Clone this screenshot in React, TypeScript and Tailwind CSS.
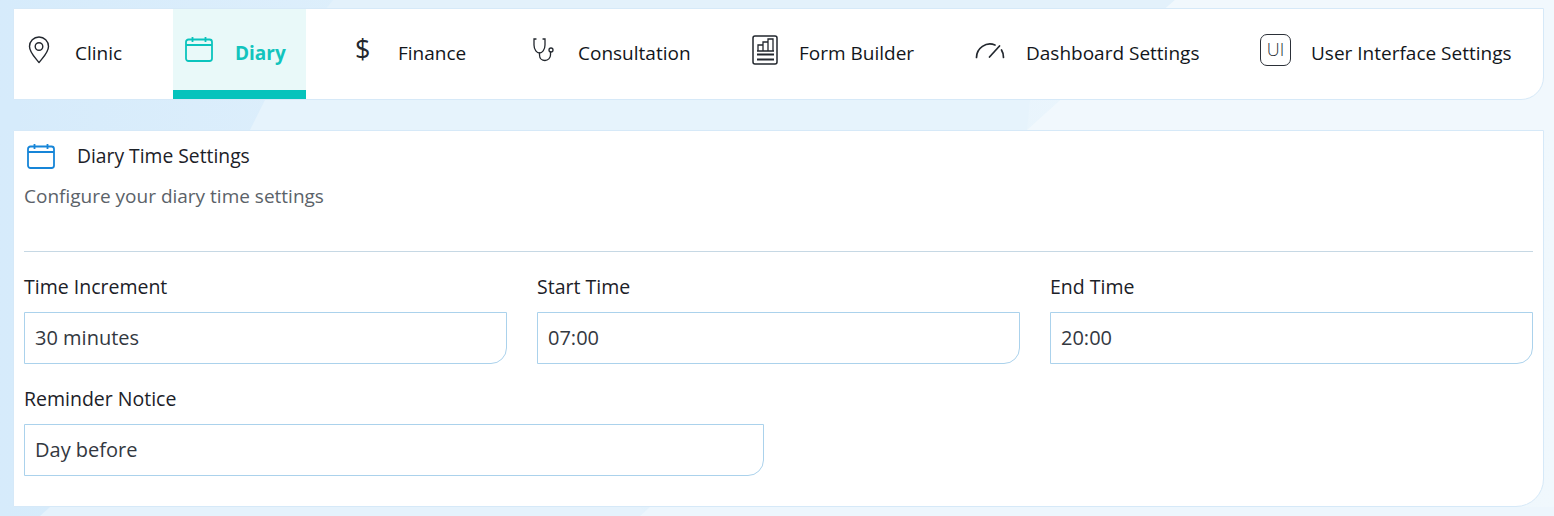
const font = "font-['Open_Sans',sans-serif]";

function PinIcon() {
  return (
    <svg width="22" height="28" viewBox="0 0 22 28" fill="none" stroke="#22272e" strokeWidth="1.4">
      <path d="M11 26.500C7 21.500 1.500 16.500 1.500 10.500a9.500 9.500 0 0 1 19 0c0 6-5.500 11-9.500 16z" strokeLinejoin="round" />
      <circle cx="11" cy="10.500" r="3.800" />
    </svg>
  );
}

function CalendarIcon({ color }: { color: string }) {
  return (
    <svg width="28" height="25" viewBox="0 0 28 25" fill="none" stroke={color} strokeWidth="1.8">
      <rect x="1" y="2.500" width="26" height="21.500" rx="2.500" />
      <path d="M1 8h26M7.500 0v5M20.500 0v5" />
    </svg>
  );
}

function StethoscopeIcon() {
  return (
    <svg width="22" height="25" viewBox="0 0 22 25" fill="none" stroke="#22272e" strokeWidth="1.300" strokeLinecap="round">
      <path d="M4 2H2v6c0 5 3 8 5.500 8S13 13 13 8V2h-2" />
      <path d="M7.500 16v2c0 3.500 2.500 5.500 5.500 5.500s5.500-2.500 5.500-5.500v-3" />
      <circle cx="19" cy="13" r="2" />
    </svg>
  );
}

function ReportIcon() {
  return (
    <svg width="26" height="30" viewBox="0 0 26 30" fill="none" stroke="#22272e" strokeWidth="1.300">
      <rect x="1" y="1" width="24" height="28" rx="2" strokeWidth="1.500" />
      <path d="M6 16v-6h5v6M11 16V7h5v9M16 16V4h5v12M5 16h17" />
      <path d="M5 19.500h17M5 24.500h17" strokeWidth="1.800" />
    </svg>
  );
}

function GaugeIcon() {
  return (
    <svg width="30" height="18" viewBox="0 0 30 18" fill="none" stroke="#22272e" strokeWidth="1.700" strokeLinecap="round">
      <path d="M1.500 16.500A13.500 13.500 0 0 1 20 4" />
      <path d="M14.500 16 24.500 5" />
      <path d="M26.500 9a13.500 13.500 0 0 1 2 7.500" />
    </svg>
  );
}

const tabs = [
  { label: "Clinic", icon: <PinIcon />, className: "-ml-[2px] w-[132px] shrink-0", iconClass: "pl-[4px]" },
  { label: "Diary", icon: <CalendarIcon color="#0bc4bd" />, className: "w-[133px] shrink-0", iconClass: "", active: true },
  {
    label: "Finance",
    icon: <span className="-mt-[2px] text-[27px] leading-none text-[#22272e]">$</span>,
    className: "w-[151px] shrink-0",
    iconClass: "pl-[8px]",
  },
  { label: "Consultation", icon: <StethoscopeIcon />, className: "w-[192px] shrink-0", iconClass: "pl-[5px]" },
  { label: "Form Builder", icon: <ReportIcon />, className: "w-[198px] shrink-0", iconClass: "pl-[4px]" },
  { label: "Dashboard Settings", icon: <GaugeIcon />, className: "w-[256px] shrink-0", iconClass: "" },
  {
    label: "User Interface Settings",
    icon: (
      <span className="flex h-[32px] w-[31px] items-center justify-center rounded-[7px] border-[1.5px] border-[#2b3038] text-[18px] font-light text-[#2b3038]">
        UI
      </span>
    ),
    className: "flex-1",
    iconClass: "",
  },
];

function Field({ label, value }: { label: string; value: string }) {
  return (
    <div className="flex flex-col">
      <label className="mb-[12px] text-[19.5px] leading-[26px] font-medium text-[#1c2128]">{label}</label>
      <div className="flex h-[52px] items-center rounded-br-[16px] border border-[#abd2ec] bg-white px-[10px] text-[20px] text-[#33383f]">
        {value}
      </div>
    </div>
  );
}

export default function App() {
  return (
    <div
      className={`${font} relative min-h-[516px] overflow-hidden bg-gradient-to-r from-[#d6ebfb] via-[#e6f3fc] to-[#f0f8fd] pr-[10px] pl-[13px] pt-[8px]`}
    >
      <svg className="absolute inset-0 h-full w-full" viewBox="0 0 1554 516" preserveAspectRatio="none">
        <polygon points="255,100 333,0 1175,0 1027,130 1060,100" fill="#e3f1fb" />
        <polygon points="1027,130 1060,100 1175,0 1554,0 1554,130" fill="#f1f8fd" />
        <polygon points="250,130 265,100 1030,100 1027,130" fill="#e6f3fc" />
        <polygon points="0,100 0,130 20,130 20,100" fill="#d6ebfb" />
        <polygon points="40,516 50,507 640,507 650,516" fill="#e5f2fc" />
        <polygon points="640,516 650,507 1554,507 1554,516" fill="#edf6fd" />
      </svg>

      <div className="relative flex flex-col">
        <nav className="flex h-[92px] items-stretch gap-[29px] rounded-br-[23px] border border-[#d6e9f8] bg-white">
          {tabs.map((tab) => (
            <div
              key={tab.label}
              className={`flex items-start pt-[23px] pl-[12px] ${tab.className} ${
                tab.active ? "border-b-[9px] border-[#06c3bc] bg-[#e9f9f9]" : ""
              }`}
            >
              <span className={`flex h-[35px] shrink-0 items-center ${tab.active ? "w-[50px]" : "w-[51px]"} ${tab.iconClass}`}>
                {tab.icon}
              </span>
              <span
                className={`whitespace-nowrap pt-[6px] text-[19px] leading-[30px] ${
                  tab.active ? "font-bold text-[#12c4bd]" : "text-[#12161b]"
                }`}
              >
                {tab.label}
              </span>
            </div>
          ))}
        </nav>

        <section className="mt-[30px] h-[377px] rounded-br-[28px] border border-[#d6e9f8] bg-white px-[10px]">
          <div className="flex items-center pt-[12px] pl-[3px]">
            <span className="flex w-[50px] shrink-0 items-center">
              <CalendarIcon color="#1685d8" />
            </span>
            <h2 className="text-[19.3px] leading-[26px] font-medium text-[#1c2128]">Diary Time Settings</h2>
          </div>
          <p className="mt-[14px] text-[19px] leading-[26px] text-[#5b6269]">Configure your diary time settings</p>

          <hr className="mt-[42px] border-[#c6d8e4]" />

          <div className="mt-[22px] grid grid-cols-3 gap-x-[30px]">
            <Field label="Time Increment" value="30 minutes" />
            <Field label="Start Time" value="07:00" />
            <Field label="End Time" value="20:00" />
          </div>
          <div className="mt-[22px] grid grid-cols-2 gap-x-[30px]">
            <Field label="Reminder Notice" value="Day before" />
          </div>
        </section>
      </div>
    </div>
  );
}
